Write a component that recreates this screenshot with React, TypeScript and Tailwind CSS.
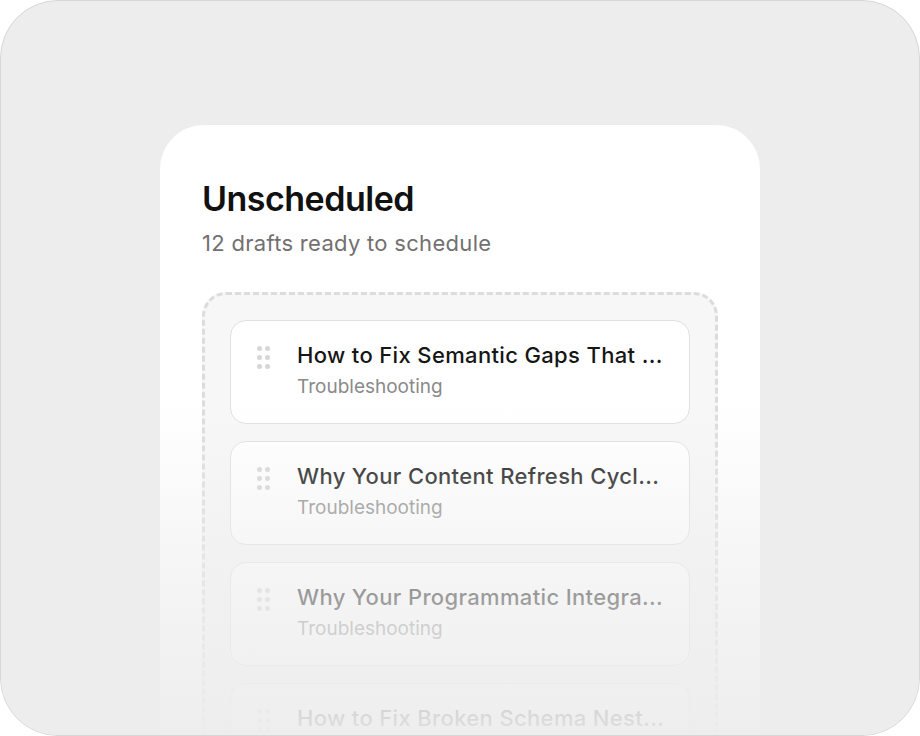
const drafts = [
  { title: 'How to Fix Semantic Gaps That ...', tag: 'Troubleshooting' },
  { title: 'Why Your Content Refresh Cycl...', tag: 'Troubleshooting' },
  { title: 'Why Your Programmatic Integra...', tag: 'Troubleshooting' },
  { title: 'How to Fix Broken Schema Nest...', tag: 'Troubleshooting' },
];

function DragHandle() {
  return (
    <div className="grid grid-cols-2 gap-x-[3px] gap-y-[4px] shrink-0">
      {Array.from({ length: 6 }).map((_, i) => (
        <span key={i} className="w-[5px] h-[5px] rounded-full bg-[#d6d6d6]" />
      ))}
    </div>
  );
}

function DraftRow({ title, tag }: { title: string; tag: string }) {
  return (
    <div className="h-[104px] shrink-0 rounded-[16px] border-[1.5px] border-[#e1e1e1] bg-white flex items-start gap-[27px] pl-[26px] pr-4 pt-[25px]">
      <DragHandle />
      <div className="min-w-0 -mt-[6px]">
        <div className="text-[22px] leading-[30px] font-medium text-[#161616] tracking-[0.35px] whitespace-nowrap overflow-hidden">
          {title}
        </div>
        <div className="text-[19px] leading-[26px] text-[#8a8a8a] mt-[4px]">{tag}</div>
      </div>
    </div>
  );
}

export default function App() {
  return (
    <div
      className="relative w-[920px] h-[736px] overflow-hidden rounded-[58px] border border-[#d6d6d6] bg-[#ededed] flex justify-center pt-[124px]"
      style={{ fontFamily: 'Inter, "Noto Sans", sans-serif' }}
    >
      <div className="w-[600px] shrink-0 bg-white rounded-t-[44px] px-[42px] pt-[54px] flex flex-col">
        <h1 className="text-[34px] leading-[40px] font-semibold text-[#111] tracking-[-0.5px]">Unscheduled</h1>
        <p className="text-[22px] leading-[28px] text-[#737070] tracking-[0.3px] mt-[10px]">12 drafts ready to schedule</p>

        <div className="mt-[35px] rounded-[24px] border-[3px] border-dashed border-[#dcdcdc] bg-[#f7f7f7] px-[25px] pt-[25px] flex flex-col gap-[17px] h-[500px]">
          {drafts.map((d) => (
            <DraftRow key={d.title} title={d.title} tag={d.tag} />
          ))}
        </div>
      </div>

      {/* fade out the list towards the bottom */}
      <div className="pointer-events-none absolute inset-x-0 bottom-0 h-[330px] bg-gradient-to-b from-[#ededed]/0 via-[#ededed]/55 to-[#ededed]/95" />
    </div>
  );
}
